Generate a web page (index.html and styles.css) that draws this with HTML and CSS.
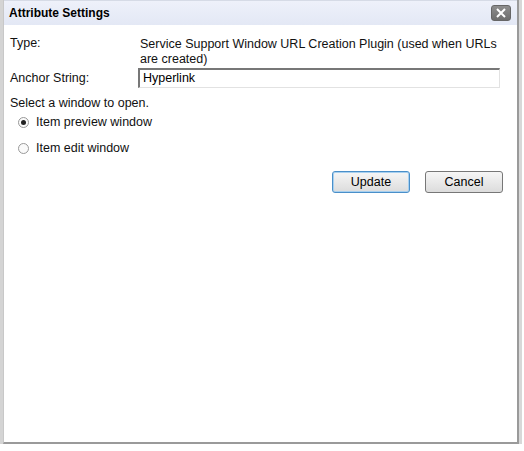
FILE: index.html
```html
<!DOCTYPE html>
<html>
<head>
<meta charset="utf-8">
<link rel="stylesheet" href="styles.css">
</head>
<body>
<div class="dialog">
  <div class="titlebar">
    <span class="title">Attribute Settings</span>
    <span class="close"><svg width="12" height="10" viewBox="0 0 12 10"><path d="M2 1 L10 9 M10 1 L2 9" stroke="#fff" stroke-width="2"/></svg></span>
  </div>
  <div class="content">
    <div class="row">
      <div class="label">Type:</div>
      <div class="value">Service Support Window URL Creation Plugin (used when URLs are created)</div>
    </div>
    <div class="row row-input">
      <div class="label">Anchor String:</div>
      <div class="input">Hyperlink</div>
    </div>
    <div class="prompt">Select a window to open.</div>
    <div class="radio-row"><span class="radio checked"></span><span>Item preview window</span></div>
    <div class="radio-row"><span class="radio"></span><span>Item edit window</span></div>
    <div class="buttons">
      <span class="btn primary">Update</span>
      <span class="btn">Cancel</span>
    </div>
  </div>
</div>
</body>
</html>
```
FILE: styles.css
```css
html, body {
  margin: 0;
  padding: 0;
  background: #fff;
}
body {
  font-family: "Liberation Sans", Arial, sans-serif;
  font-size: 12.5px;
  color: #111;
}
.dialog {
  width: 513px;
  height: 442px;
  margin-left: 3px;
  border-left: 1px solid #c8c8c8;
  border-right: 2px solid #9a9a9a;
  border-bottom: 2px solid #9a9a9a;
  box-shadow: -3px 0 0 #d4d4d4, 3px 0 0 #d8d8d8, 0 3px 0 #d8d8d8;
  display: flex;
  flex-direction: column;
  background: #fff;
}
.titlebar {
  height: 24px;
  background: linear-gradient(#eef1fa, #e3e8f5);
  display: flex;
  align-items: center;
  justify-content: space-between;
  padding: 0 6px 0 5px;
  border-top: 1px solid #d6dbe6;
}
.title {
  font-weight: bold;
  font-size: 12px;
  color: #000;
}
.close {
  width: 20px;
  height: 16px;
  border-radius: 3px;
  background: linear-gradient(#8e8e8e, #6e6e6e);
  border: 1px solid #666;
  box-sizing: border-box;
  display: flex;
  align-items: center;
  justify-content: center;
}
.content {
  padding: 11px 14px 0 6px;
}
.row {
  display: flex;
}
.label {
  width: 130px;
  flex: none;
}
.value {
  line-height: 15px;
  padding-top: 1px;
}
.row-input {
  margin-top: 1px;
  align-items: center;
}
.input {
  flex: 1;
  height: 20px;
  margin-left: -2px;
  margin-right: 3px;
  box-sizing: border-box;
  border: 1px solid #e2e2e2;
  border-top: 2px solid #777;
  border-left: 2px solid #777;
  padding: 1px 3px;
  line-height: 15px;
  color: #000;
}
.prompt {
  margin-top: 8px;
}
.radio-row {
  display: flex;
  align-items: center;
  gap: 7px;
  padding-left: 8px;
  margin-top: 3px;
  height: 18px;
}
.radio-row + .radio-row {
  margin-top: 8px;
}
.radio {
  width: 9px;
  height: 9px;
  border-radius: 50%;
  border: 1px solid #999;
  background: #fafafa;
  position: relative;
}
.radio.checked::after {
  content: "";
  position: absolute;
  left: 2px;
  top: 2px;
  width: 5px;
  height: 5px;
  border-radius: 50%;
  background: #222;
}
.buttons {
  display: flex;
  justify-content: flex-end;
  gap: 15px;
  margin-top: 14px;
}
.btn {
  width: 78px;
  height: 22px;
  box-sizing: border-box;
  border: 1px solid #777;
  border-radius: 3px;
  background: linear-gradient(#f6f6f6, #dcdcdc);
  display: flex;
  align-items: center;
  justify-content: center;
  color: #000;
}
.btn.primary {
  border-color: #4a8fc9;
  box-shadow: inset 0 0 0 1px #a8d0ef;
}
```
